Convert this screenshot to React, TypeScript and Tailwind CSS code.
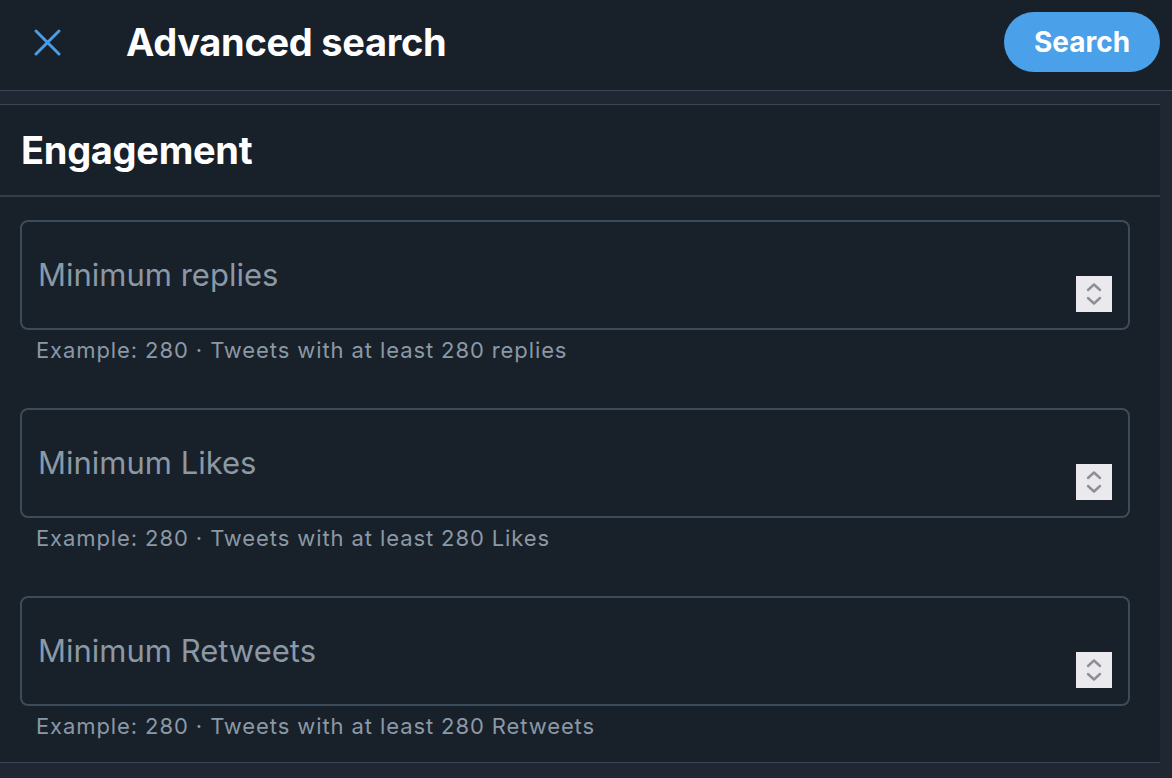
import React from "react";

const font = { fontFamily: 'Inter, "Noto Sans", "Liberation Sans", sans-serif' };

function Spinner() {
  return (
    <div className="flex h-[36px] w-[36px] items-center justify-center bg-[#e9e9ee]">
      <svg width="22" height="30" viewBox="0 0 22 30" fill="none">
        <path d="M5 11 L11 5.5 L17 11" stroke="#8e8e93" strokeWidth="2.4" strokeLinecap="round" strokeLinejoin="round" />
        <path d="M5 19 L11 24.5 L17 19" stroke="#8e8e93" strokeWidth="2.4" strokeLinecap="round" strokeLinejoin="round" />
      </svg>
    </div>
  );
}

function Field({ label, help }: { label: string; help: string }) {
  return (
    <div className="flex flex-col">
      <div className="flex h-[110px] w-[1110px] items-center justify-between rounded-[8px] border-2 border-[#3c4b5a] pl-[16px] pr-[16px]">
        <span className="text-[31px] text-[#8b98a5]">{label}</span>
        <div className="mt-[38px]">
          <Spinner />
        </div>
      </div>
      <div className="mt-[5px] h-[38px] pl-[16px] text-[22px] leading-[30px] tracking-[0.9px] text-[#8b98a5]">{help}</div>
    </div>
  );
}

export default function App() {
  return (
    <div className="flex h-[778px] w-[1172px] flex-col overflow-hidden bg-[#1e2732]" style={font}>
      <header className="flex h-[91px] shrink-0 items-start border-b border-[#3a4754] bg-[#18202a] pt-[12px]">
        <div className="flex h-[60px] w-[126px] items-center pl-[33px]">
          <svg width="29" height="29" viewBox="0 0 29 29" fill="none">
            <path d="M3 3 L26 26 M26 3 L3 26" stroke="#4a9de6" strokeWidth="3" strokeLinecap="round" />
          </svg>
        </div>
        <h1 className="flex h-[60px] flex-1 items-center text-[38px] font-bold tracking-[-0.3px] text-white">Advanced search</h1>
        <button className="mr-[12px] h-[60px] w-[156px] rounded-full bg-[#4aa0e9] text-[28px] font-bold text-white">
          Search
        </button>
      </header>
      <div className="mt-[13px] flex w-[1160px] flex-col border-y border-[#3a4754] bg-[#18202a]">
        <div className="flex h-[92px] items-center border-b-2 border-[#323e4a] pl-[21px]">
          <h2 className="text-[38px] font-bold tracking-[-0.3px] text-white">Engagement</h2>
        </div>
        <div className="flex flex-col gap-[35px] pl-[20px] pt-[23px] pb-[13px]">
          <Field label="Minimum replies" help="Example: 280 · Tweets with at least 280 replies" />
          <Field label="Minimum Likes" help="Example: 280 · Tweets with at least 280 Likes" />
          <Field label="Minimum Retweets" help="Example: 280 · Tweets with at least 280 Retweets" />
        </div>
      </div>
    </div>
  );
}
